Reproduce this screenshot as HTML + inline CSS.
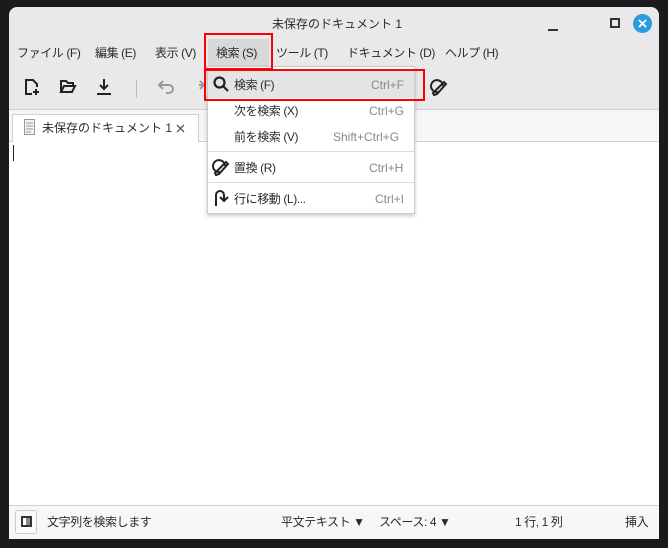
<!DOCTYPE html>
<html><head><meta charset="utf-8"><style>
*{margin:0;padding:0;box-sizing:border-box}
body{width:668px;height:548px;background:#1b1b1d;position:relative;overflow:hidden;font-family:"Liberation Sans","Noto Sans CJK JP",sans-serif;font-size:12px;line-height:16px;color:#2b2b2b}
.win{position:absolute;left:9px;top:7px;width:650px;height:532px;background:#e9e9eb;border-radius:8px 8px 0 0;overflow:hidden}
.abs{position:absolute}
.t{position:absolute;white-space:nowrap;line-height:16px}
.m{letter-spacing:-0.4px}
svg{position:absolute}
</style></head><body>
<div class="win">
  <div class="t" style="left:263px;top:9px">未保存のドキュメント 1</div>
  <div class="abs" style="left:539px;top:22px;width:10px;height:2px;background:#333"></div>
  <div class="abs" style="left:601px;top:11px;width:10px;height:10px;border:2px solid #333"></div>
  <div class="abs" style="left:624px;top:7px;width:19px;height:19px;border-radius:50%;background:#2a9be0"></div>
  <svg style="left:629px;top:12px" width="9" height="9" viewBox="0 0 9 9" stroke="#fff" stroke-width="1.8"><path d="M1 1l7 7M8 1L1 8"/></svg>
  <!-- menubar -->
  <div class="abs" style="left:199px;top:32px;width:61px;height:27px;background:#d8d8da"></div>
  <div class="t m" style="left:8px;top:38px">ファイル (F)</div>
  <div class="t m" style="left:86px;top:38px">編集 (E)</div>
  <div class="t m" style="left:146px;top:38px">表示 (V)</div>
  <div class="t m" style="left:207px;top:38px">検索 (S)</div>
  <div class="t m" style="left:267px;top:38px">ツール (T)</div>
  <div class="t m" style="left:338px;top:38px">ドキュメント (D)</div>
  <div class="t m" style="left:436px;top:38px">ヘルプ (H)</div>
  <!-- toolbar icons -->
  <svg style="left:14px;top:71px" width="18" height="18" viewBox="0 0 18 18" fill="none" stroke="#222" stroke-width="2"><path d="M9 16H3V2h7l4 4v3"/><path d="M13 11v6M10 14h6"/></svg>
  <svg style="left:50px;top:72px" width="18" height="16" viewBox="0 0 18 16" fill="none" stroke="#222" stroke-width="2"><path d="M2 13V2h5l2 2h5v2M2 13l3-6h11l-3 6z"/></svg>
  <svg style="left:87px;top:71px" width="16" height="18" viewBox="0 0 16 18" fill="none" stroke="#222" stroke-width="2"><path d="M8 1v10M4 7l4 4 4-4M1 16h14"/></svg>
  <div class="abs" style="left:127px;top:73px;width:1px;height:18px;background:#bbb"></div>
  <svg style="left:149px;top:73px" width="18" height="14" viewBox="0 0 18 14" fill="none" stroke="#999" stroke-width="2"><path d="M5 1L1 5l4 4M1 5h10a4 4 0 010 8H8"/></svg>
  <svg style="left:186px;top:73px" width="10" height="14" viewBox="0 0 10 14" fill="none" stroke="#999" stroke-width="2"><path d="M5 1l4 4-4 4M9 5H4"/></svg>
  <svg style="left:421px;top:72px" width="18" height="18" viewBox="0 0 18 18" fill="none" stroke="#222" stroke-width="2"><path d="M8 13a6 6 0 1 1 5-6M3 14L14 3l2 2-9 10-3 1z"/></svg>
  <div class="abs" style="left:0;top:102px;width:650px;height:1px;background:#cfcfd1"></div>
  <!-- tab bar -->
  <div class="abs" style="left:0;top:103px;width:650px;height:31px;background:#f6f6f6"></div>
  <div class="abs" style="left:0;top:134px;width:650px;height:1px;background:#cfcfd1"></div>
  <div class="abs" style="left:3px;top:107px;width:187px;height:28px;background:#fff;border:1px solid #cfcfd1;border-bottom:none"></div>
  <svg style="left:15px;top:112px" width="11" height="16" viewBox="0 0 11 16"><rect x="0.5" y="0.5" width="10" height="15" fill="#f4f4f4" stroke="#999"/><path d="M2 4h7M2 7h7M2 10h7M2 13h5" stroke="#999"/></svg>
  <div class="t" style="left:33px;top:113px">未保存のドキュメント 1</div>
  <svg style="left:167px;top:117px" width="9" height="9" viewBox="0 0 9 9" stroke="#555" stroke-width="1.3"><path d="M1 1l7 7M8 1L1 8"/></svg>
  <!-- editor -->
  <div class="abs" style="left:0;top:135px;width:650px;height:363px;background:#fff"></div>
  <div class="abs" style="left:4px;top:138px;width:1px;height:16px;background:#222"></div>
  <!-- status -->
  <div class="abs" style="left:0;top:498px;width:650px;height:1px;background:#cfcfd1"></div>
  <div class="abs" style="left:0;top:499px;width:650px;height:33px;background:#f7f7f7"></div>
  <div class="abs" style="left:6px;top:503px;width:22px;height:24px;border:1px solid #ccc;border-radius:3px;background:#fafafa"></div>
  <div class="abs" style="left:12px;top:509px;width:11px;height:11px;border:2px solid #333;background:linear-gradient(90deg,#fff 0 40%,#888 40%)"></div>
  <div class="t m" style="left:38px;top:507px">文字列を検索します</div>
  <div class="t m" style="left:272px;top:507px">平文テキスト ▼</div>
  <div class="t m" style="left:370px;top:507px">スペース: 4 ▼</div>
  <div class="t m" style="left:506px;top:507px">1 行, 1 列</div>
  <div class="t m" style="left:616px;top:507px">挿入</div>
</div>
<!-- dropdown -->
<div class="abs" style="left:207px;top:66px;width:208px;height:148px;background:#fff;border:1px solid #ccc;box-shadow:0 2px 4px rgba(0,0,0,.2)"></div>
<div class="abs" style="left:208px;top:71px;width:206px;height:27px;background:#e4e4e6"></div>
<svg style="left:213px;top:76px" width="16" height="16" viewBox="0 0 16 16" fill="none" stroke="#222" stroke-width="2.2"><circle cx="6.5" cy="6.5" r="5"/><path d="M10 10l5 5"/></svg>
<div class="t m" style="left:234px;top:77px">検索 (F)</div>
<div class="t" style="left:371px;top:77px;color:#888">Ctrl+F</div>
<div class="t m" style="left:234px;top:103px">次を検索 (X)</div>
<div class="t" style="left:369px;top:103px;color:#888">Ctrl+G</div>
<div class="t m" style="left:234px;top:129px">前を検索 (V)</div>
<div class="t" style="left:333px;top:129px;color:#888">Shift+Ctrl+G</div>
<div class="abs" style="left:208px;top:151px;width:206px;height:1px;background:#ddd"></div>
<svg style="left:212px;top:159px" width="18" height="18" viewBox="0 0 18 18" fill="none" stroke="#222" stroke-width="2"><path d="M8 13a6 6 0 1 1 5-6M3 14L14 3l2 2-9 10-3 1z"/></svg>
<div class="t m" style="left:234px;top:160px">置換 (R)</div>
<div class="t" style="left:369px;top:160px;color:#888">Ctrl+H</div>
<div class="abs" style="left:208px;top:182px;width:206px;height:1px;background:#ddd"></div>
<svg style="left:214px;top:189px" width="16" height="18" viewBox="0 0 16 18" fill="none" stroke="#222" stroke-width="2"><path d="M2 17V6a4 4 0 0 1 8 0v5M6 8l4 4 4-4"/></svg>
<div class="t m" style="left:234px;top:191px">行に移動 (L)...</div>
<div class="t" style="left:375px;top:191px;color:#888">Ctrl+I</div>
<!-- red boxes -->
<div class="abs" style="left:204px;top:33px;width:69px;height:37px;border:2px solid #f00"></div>
<div class="abs" style="left:204px;top:69px;width:221px;height:32px;border:2px solid #f00"></div>
</body></html>
